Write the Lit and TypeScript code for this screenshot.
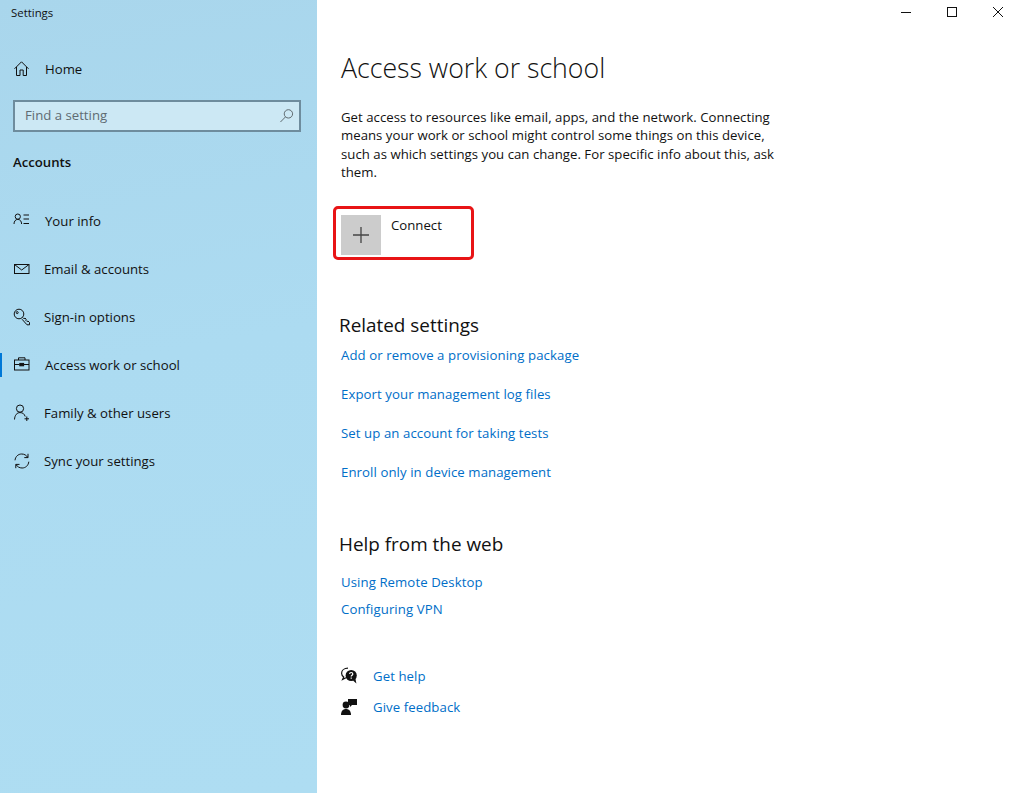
import { LitElement, html, css, svg } from "lit";
import { customElement } from "lit/decorators.js";

const ic = (body: unknown, w = 18, h = 18) => html`<svg class="ic" width=${w} height=${h} viewBox="0 0 18 18" fill="none" stroke="#111" stroke-width="1">${body}</svg>`;

const icons = {
  home: svg`<path d="M1.5 8.8 8.5 1.8 15.5 8.8"/><path d="M3.5 7V15.5H7V10H10.2V15.5H13.5V7"/>`,
  info: svg`<circle cx="4.8" cy="4.6" r="2.6"/><path d="M1 12C1 9.2 2.6 7.4 4.8 7.4S8.6 9.2 8.6 12"/><path d="M10.5 3H16M10.5 7H16M10.5 11.5H16"/>`,
  mail: svg`<rect x="1.5" y="4.5" width="14.5" height="9"/><path d="M1.5 4.5 8.7 10 16 4.5"/>`,
  key: svg`<circle cx="6" cy="6" r="4.8"/><circle cx="4.2" cy="4.6" r="1"/><path d="M9.6 9.4 11 10.8 12 10 13.2 11.3 12.7 12.2 14 13.5 15 13 16.5 14.5V16.8H14L9 11.2"/>`,
  work: svg`<rect x="1.5" y="4" width="14.5" height="10"/><path d="M5.5 4V1.8H12V4M1.5 8.5H6.5M11 8.5H16"/><rect x="6.8" y="7.4" width="3.8" height="2.4" fill="#111"/>`,
  family: svg`<circle cx="7" cy="4.6" r="3.6"/><path d="M1.5 15.5C1.8 11 4 8.6 7 8.6S11.3 10 12.2 12.5"/><path d="M13.8 12.5V17M11.5 14.8H16"/>`,
  sync: svg`<path d="M2 8.3C2.4 4.5 5.2 2 8.7 2 11.2 2 13.4 3.2 14.8 5.4"/><path d="M15 1.8V5.6H11.3"/><path d="M15.8 9.7C15.4 13.5 12.6 16 9.1 16 6.6 16 4.4 14.8 3 12.6"/><path d="M2.8 16.2V12.4H6.5"/>`,
  search: svg`<circle cx="10.6" cy="6.6" r="4.7"/><path d="M7.3 10 1.6 15.8"/>`,
};

@customElement("app-root")
export class AppRoot extends LitElement {
  static styles = css`
    :host { display: block; width: 1018px; height: 793px; overflow: hidden; font-family: "Open Sans", "Noto Sans", sans-serif; color: #111; background: #fff; }
    .page { display: flex; height: 793px; }
    .side { width: 317px; flex: none; background: linear-gradient(170deg, #a9d6ec 0%, #acdbf1 45%, #aeddf2 100%); display: flex; flex-direction: column; }
    .title { font-size: 11.4px; height: 26px; line-height: 26px; padding-left: 11px; }
    .row { display: flex; align-items: center; height: 48px; font-size: 13.2px; position: relative; }
    .row .ic { margin-left: 13px; flex: none; }
    .row span { margin-left: 13px; }
    .home { margin-top: 19px; }
    .home span { margin-left: 14px; }
    .row.info span, .row.work span { margin-left: 14px; }
    .row.active::before { content: ""; position: absolute; left: 0; top: 12px; width: 2px; height: 24px; background: #0078d7; }
    .search { margin: 7px 16px 0 13px; height: 32px; box-sizing: border-box; border: 2px solid #6e8c9d; background: #cce8f4; display: flex; align-items: center; justify-content: space-between; padding: 0 4px 3px 10px; font-size: 13.2px; color: #5f6b72; }
    .search .ic { opacity: .65; margin-top: 2px; }
    .group { margin: 19px 0 0 13px; height: 22px; line-height: 22px; font-size: 13.2px; font-weight: 600; }
    .nav { margin-top: 24px; }
    .main { flex: 1; display: flex; flex-direction: column; min-width: 0; }
    .bar { display: flex; justify-content: flex-end; height: 24px; }
    .btn { width: 46px; height: 24px; display: flex; align-items: center; justify-content: center; }
    .btn.last { width: 43px; justify-content: flex-start; padding-left: 17px; box-sizing: border-box; }
    .content { padding-left: 24px; display: flex; flex-direction: column; align-items: flex-start; }
    h1 { margin: 24px 0 0; height: 40px; line-height: 40px; font-size: 26.7px; font-weight: 300; }
    p { margin: 20px 0 0; font-size: 13.2px; line-height: 18.4px; white-space: nowrap; letter-spacing: 0.02px; }
    .connect { margin: 24px 0 0 -8px; width: 141px; height: 54px; box-sizing: border-box; border: 3px solid #e81416; border-radius: 5px; padding: 6px 5px 5px; display: flex; align-items: flex-start; gap: 10px; font-size: 13.2px; }
    .tile { width: 40px; height: 40px; flex: none; background: #ccc; display: flex; align-items: center; justify-content: center; }
    .label { line-height: 20px; }
    h2 { margin: 0 0 0 -2px; font-size: 18.9px; font-weight: 400; height: 28px; line-height: 28px; }
    .rel { margin-top: 51px; }
    .web { margin-top: 48px; }
    a { color: #006ec8; font-size: 13.2px; line-height: 20px; display: block; text-decoration: none; letter-spacing: 0.08px; }
    .links { display: flex; flex-direction: column; margin-top: 6px; }
    .gap39 { gap: 19px; }
    .gap27 { gap: 7px; margin-top: 14px; }
    .help { display: flex; flex-direction: column; gap: 11px; margin-top: 47px; }
    .help div { display: flex; align-items: center; gap: 16px; }
  `;

  render() {
    const rows: [keyof typeof icons, string, string][] = [
      ["info", "Your info", "info"],
      ["mail", "Email & accounts", "email"],
      ["key", "Sign-in options", "sign"],
      ["work", "Access work or school", "work active"],
      ["family", "Family & other users", "family"],
      ["sync", "Sync your settings", "sync"],
    ];
    return html`<div class="page">
      <aside class="side">
        <div class="title">Settings</div>
        <div class="row home">${ic(icons.home)}<span>Home</span></div>
        <div class="search">Find a setting ${ic(icons.search, 16, 16)}</div>
        <div class="group">Accounts</div>
        <nav class="nav">
          ${rows.map(([i, t, c]) => html`<div class="row ${c}">${ic(icons[i])}<span>${t}</span></div>`)}
        </nav>
      </aside>
      <main class="main">
        <div class="bar">
          <div class="btn"><svg width="12" height="12" viewBox="0 0 12 12" stroke="#111"><path d="M1 6.5H11"/></svg></div>
          <div class="btn"><svg width="12" height="12" viewBox="0 0 12 12" fill="none" stroke="#111"><rect x="1.5" y="1.5" width="9" height="9"/></svg></div>
          <div class="btn last"><svg width="12" height="12" viewBox="0 0 12 12" fill="none" stroke="#111"><path d="M1 1 11 11M11 1 1 11"/></svg></div>
        </div>
        <div class="content">
          <h1>Access work or school</h1>
          <p>Get access to resources like email, apps, and the network. Connecting<br>means your work or school might control some things on this device,<br>such as which settings you can change. For specific info about this, ask<br>them.</p>
          <div class="connect">
            <div class="tile"><svg width="18" height="18" viewBox="0 0 18 18" stroke="#444" stroke-width="1.3"><path d="M9 1V17M1 9H17"/></svg></div>
            <div class="label">Connect</div>
          </div>
          <h2 class="rel">Related settings</h2>
          <div class="links gap39">
            <a>Add or remove a provisioning package</a>
            <a>Export your management log files</a>
            <a>Set up an account for taking tests</a>
            <a>Enroll only in device management</a>
          </div>
          <h2 class="web">Help from the web</h2>
          <div class="links gap27">
            <a>Using Remote Desktop</a>
            <a>Configuring VPN</a>
          </div>
          <div class="help">
            <div><svg width="16" height="20" viewBox="0 0 16 20"><path d="M7 2.2C3.2 2.2.6 4.4.6 7.2c0 1.6.8 2.9 2.1 3.8L1.6 13.4l3.4-1.7" fill="none" stroke="#111" stroke-width="1.2"/><circle cx="10.2" cy="9.5" r="5.6" fill="#111"/><path d="M12 14.5l3.4 3-.9-4.6z" fill="#111"/><path d="M8.6 8c0-2 3.2-2 3.2 0 0 1.3-1.6 1.2-1.6 2.6M10.2 11.6v1.2" stroke="#fff" stroke-width="1.2" fill="none"/></svg><a>Get help</a></div>
            <div><svg width="16" height="20" viewBox="0 0 16 20" fill="#111"><circle cx="5" cy="8" r="3.4"/><path d="M0 18c0-4 2-6 5-6s5 2 5 6z"/><path d="M7 2h9v6h-5l-2 2V8H7z"/></svg><a>Give feedback</a></div>
          </div>
        </div>
      </main>
    </div>`;
  }
}
